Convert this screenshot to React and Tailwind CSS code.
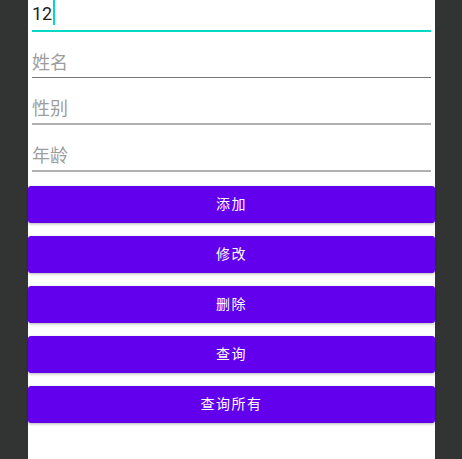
import React from "react";

const fields = ["姓名", "性别", "年龄"];
const actions = ["添加", "修改", "删除", "查询", "查询所有"];

const App = () => {
  return (
    <div
      className="flex h-[459px] w-[462px] overflow-hidden bg-[#323433]"
      style={{ fontFamily: "Roboto, 'Noto Sans CJK SC', sans-serif" }}
    >
      <div className="w-[28px] shrink-0" />
      <div className="flex w-[407px] shrink-0 flex-col bg-white">
        <div className="px-1">
          {/* first field, scrolled up a little */}
          <div className="flex h-[32px] items-end border-b-2 border-[#03dac5] pb-[4px]">
            <span className="text-[18px] leading-[24px] text-[#222]">12</span>
            <span className="mb-[1px] ml-[1px] h-[25px] w-[2px] bg-[#03dac5]" />
          </div>
          {fields.map((label, i) => (
            <div
              key={label}
              className={
                i === 0
                  ? "flex h-[46px] items-end border-b border-[#777777] pb-[2px]"
                  : "flex h-[47px] items-end border-b-2 border-[#b0b0b0] pb-[2px]"
              }
            >
              <span className="text-[18px] leading-[24px] text-[#9e9e9e]">
                {label}
              </span>
            </div>
          ))}
        </div>

        <div className="mt-[14px] flex flex-col gap-[13px]">
          {actions.map((name) => (
            <button
              key={name}
              className="flex h-[37px] items-center justify-center rounded-[3px] bg-[#6200ee] text-[14px] tracking-[1.5px] text-white shadow-[0_1px_3px_rgba(0,0,0,0.3)]"
            >
              {name}
            </button>
          ))}
        </div>
      </div>
      <div className="flex-1" />
    </div>
  );
};

export default App;
